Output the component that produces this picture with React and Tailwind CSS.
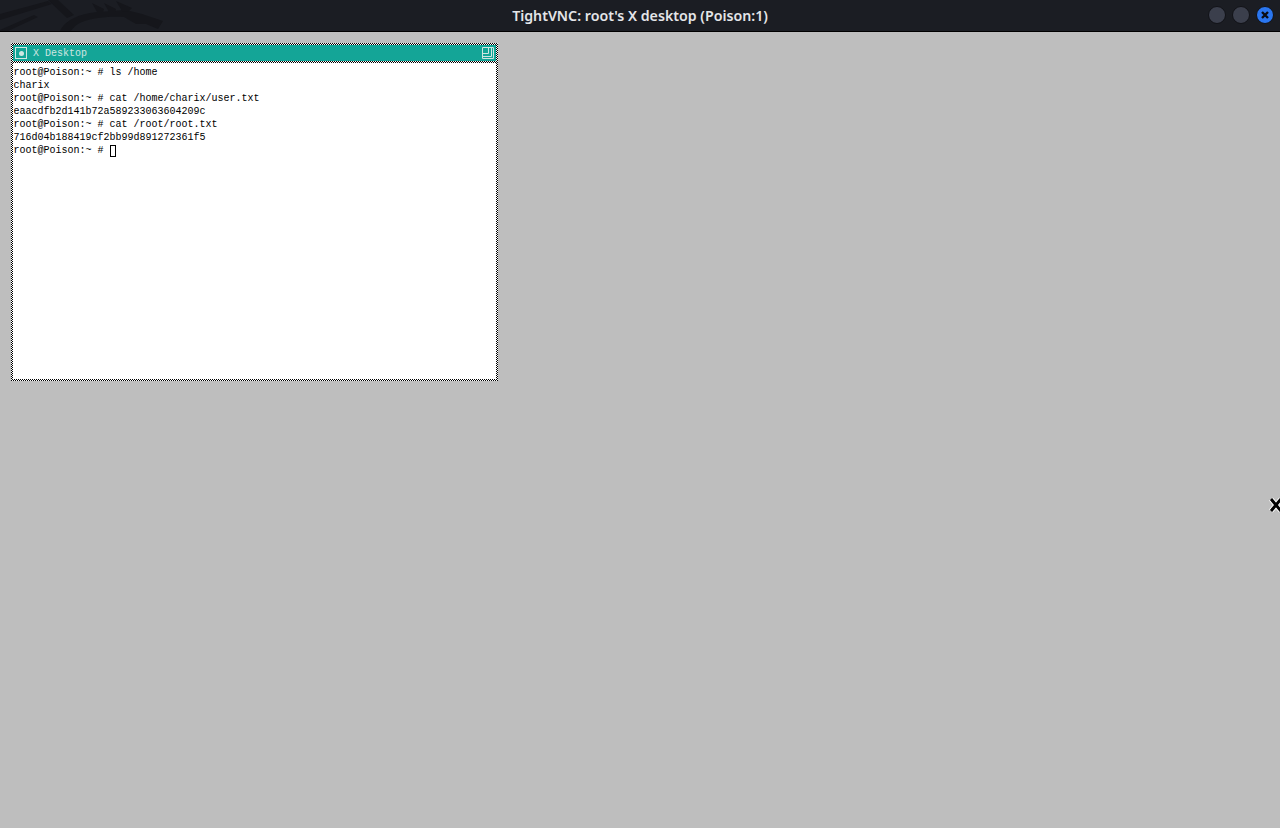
const lines = [
  "root@Poison:~ # ls /home",
  "charix",
  "root@Poison:~ # cat /home/charix/user.txt",
  "eaacdfb2d141b72a589233063604209c",
  "root@Poison:~ # cat /root/root.txt",
  "716d04b188419cf2bb99d891272361f5",
];

const checker =
  "bg-[repeating-conic-gradient(#000_0_25%,#fff_0_50%)] bg-[length:2px_2px]";

const Dragon = () => (
  <svg
    className="absolute left-0 top-0 w-[170px] h-[31px]"
    viewBox="0 0 170 31"
    fill="#15161b"
  >
    <path d="M0 14 L48 1 L52 4 L0 20Z" />
    <path d="M0 30 L34 15 L38 17 L8 31 L0 31Z" />
    <path d="M48 0 L58 0 L74 15 L67 18Z" />
    <path d="M60 31 C64 22 74 16 90 13 C104 11 116 11 126 10 L142 14 L163 21 L158 29 L146 24 L136 24 L124 17 C108 16 88 18 78 24 C74 27 72 29 71 31Z" />
    <path d="M92 3 L104 9 L103 12 L97 12Z" />
    <path d="M104 3 L116 9 L115 12 L109 12Z" />
    <path d="M116 1 L132 8 L128 12 L122 11Z" />
  </svg>
);

const WindowButton = ({ children, active }) => (
  <div
    className={`w-[18px] h-[18px] rounded-full flex items-center justify-center border border-[#111217] ${
      active ? "bg-[#2a76f0]" : "bg-[#3b3f4c]"
    }`}
  >
    {children}
  </div>
);

const App = () => {
  return (
    <div className="w-[1280px] h-[828px] overflow-hidden bg-[#bebebe] flex flex-col relative font-['Liberation_Mono',monospace]">
      <header className="relative h-[32px] shrink-0 bg-[#1b1d23] border-b border-black flex items-center justify-center overflow-hidden">
        <Dragon />
        <span className="relative font-['Noto_Sans',sans-serif] text-[14.2px] font-semibold text-[#e4e5e8]">
          TightVNC: root's X desktop (Poison:1)
        </span>
        <div className="absolute right-[6px] top-[6px] flex gap-[6px]">
          <WindowButton />
          <WindowButton />
          <WindowButton active>
            <svg className="w-[12px] h-[12px]" viewBox="0 0 12 12">
              <path
                d="M3 3 L9 9 M9 3 L3 9"
                stroke="#0b0d14"
                strokeWidth="2.4"
              />
            </svg>
          </WindowButton>
        </div>
      </header>

      <div className="pl-[11px] pt-[11px]">
        <div className={`w-[487px] h-[338px] p-[2px] flex flex-col ${checker}`}>
          <div className="h-[16px] shrink-0 bg-[#14a597] flex items-center justify-between pl-[2px] pr-[2px] text-[#cfe6e1]">
            <div className="flex items-center">
              <div className="w-[12px] h-[12px] border border-[#cfe6e1] flex items-center justify-center">
                <div className="w-[5px] h-[5px] rounded-full bg-[#cfe6e1]" />
              </div>
              <span className="ml-[6px] pt-[2px] text-[10px] leading-none">X Desktop</span>
            </div>
            <svg className="w-[12px] h-[12px]" viewBox="0 0 12 12" fill="none">
              <path
                d="M.5.5H11.5V11.5H.5ZM.5 6.5H6.5V.5M9.5 .5V9.5H.5"
                stroke="#cfe6e1"
              />
            </svg>
          </div>
          <div className={`h-[2px] shrink-0 ${checker}`} />
          <div className="flex-1 bg-white pl-[0.5px] pt-[3px] text-black text-[10px] leading-[13px] whitespace-pre">
            {lines.map((line) => (
              <div key={line}>{line}</div>
            ))}
            <div className="flex items-center">
              <span>{"root@Poison:~ # "}</span>
              <span className="w-[6px] h-[12px] border border-black" />
            </div>
          </div>
        </div>
      </div>

      <svg
        className="absolute left-[1268px] top-[497px] w-[16px] h-[16px]"
        viewBox="0 0 16 16"
      >
        <path d="M3 2 L8 8 L3 14 M13 2 L8 8 L13 14" fill="none" stroke="#fff" strokeWidth="5" />
        <path d="M3 2 L8 8 L3 14 M13 2 L8 8 L13 14" fill="none" stroke="#000" strokeWidth="3" />
      </svg>
    </div>
  );
};

export default App;
